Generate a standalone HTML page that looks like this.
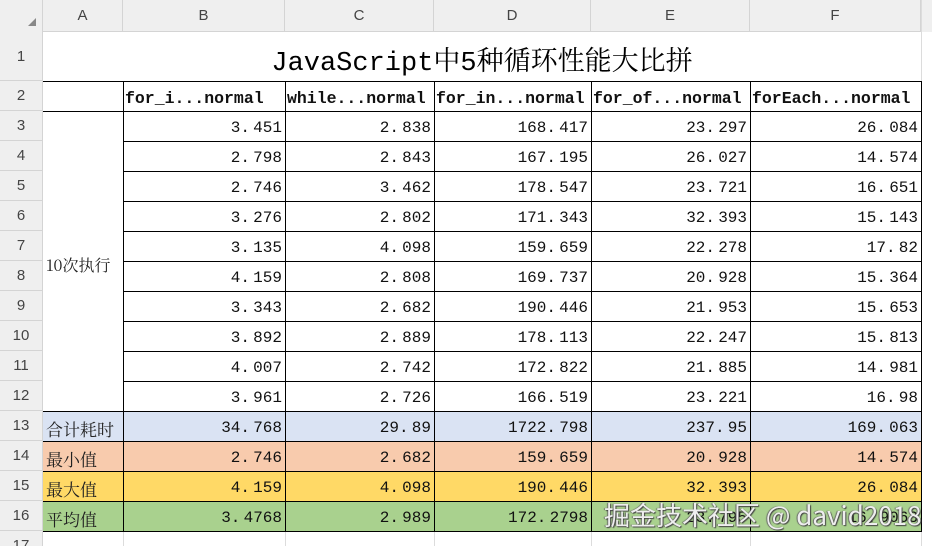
<!DOCTYPE html>
<html><head><meta charset="utf-8">
<style>
*{margin:0;padding:0;box-sizing:border-box}
html,body{width:932px;height:546px;overflow:hidden}
body{background:#fff;position:relative;font-family:"Liberation Mono","Noto Serif CJK SC",monospace}
.d{position:absolute}
.hdr{background:#efefef;color:#444;font-family:"Liberation Sans",sans-serif;font-size:15px;display:flex;align-items:center;justify-content:center}
.vl{position:absolute;width:1px;background:#000}
.hl{position:absolute;height:1px;background:#000}
.gl{position:absolute;background:#dcdcdc}
.c{position:absolute;font-size:16px;color:#111;display:flex;align-items:center;padding:0 3px;height:30px;white-space:nowrap}
.r{justify-content:flex-end}
.h{font-weight:bold;font-size:16.5px;padding:0 2px}
.cj{font-family:"Noto Serif CJK SC","Noto Sans CJK SC",serif;font-size:17px;color:#222}
</style></head><body>
<div class="d hdr" style="left:0;top:0;width:932px;height:32px"></div>
<div class="d hdr" style="left:0;top:0;width:43px;height:546px;border-right:1px solid #d4d4d4"></div>
<div class="d" style="left:28px;top:18px;width:0;height:0;border-left:8px solid transparent;border-bottom:8px solid #888"></div>
<div id="top"></div>
<script>
var cols=[43,123,285,434,591,750,921],L="ABCDEF";
var rowsY=[32,81,111,141,171,201,231,261,291,321,351,381,411,441,471,501,531,561];
var h='';
for(var i=0;i<6;i++)h+='<div class="d hdr" style="left:'+cols[i]+'px;top:0;width:'+(cols[i+1]-cols[i])+'px;height:32px;border-right:1px solid #d4d4d4;border-bottom:1px solid #d4d4d4">'+L[i]+'</div>';
h+='<div class="gl" style="left:921px;top:0;width:1px;height:546px"></div>';
for(var r=0;r<17;r++){h+='<div class="d hdr" style="left:0;top:'+rowsY[r]+'px;width:43px;height:'+(rowsY[r+1]-rowsY[r])+'px;border-bottom:1px solid #d4d4d4;border-right:1px solid #d4d4d4">'+(r+1)+'</div>';}
var fills={12:'#dae3f3',13:'#f8cbad',14:'#ffd966',15:'#a9d18e'};
for(var k in fills)h+='<div class="d" style="left:43px;top:'+rowsY[k]+'px;width:878px;height:30px;background:'+fills[k]+'"></div>';
for(var i=1;i<6;i++)h+='<div class="gl" style="left:'+cols[i]+'px;top:531px;width:1px;height:15px"></div>';
h+='<div class="d" style="left:43px;top:32px;width:878px;height:49px;display:flex;align-items:center;justify-content:center;font-family:\'Liberation Mono\',\'Noto Serif CJK SC\',monospace;font-size:27px;color:#000;padding-top:4px">JavaScript中5种循环性能大比拼</div>';
h+='<div class="hl" style="left:43px;top:81px;width:878px"></div>';
h+='<div class="hl" style="left:43px;top:111px;width:878px"></div>';
for(var r=3;r<=16;r++)h+='<div class="hl" style="left:'+(r>=12?43:123)+'px;top:'+rowsY[r]+'px;width:'+(r>=12?878:798)+'px"></div>';
for(var i=1;i<7;i++)h+='<div class="vl" style="left:'+cols[i]+'px;top:81px;height:451px"></div>';
var hd=['for_i...normal','while...normal','for_in...normal','for_of...normal','forEach...normal'];
for(var i=0;i<5;i++)h+='<div class="c h" style="left:'+cols[i+1]+'px;top:83px;width:'+(cols[i+2]-cols[i+1])+'px">'+hd[i]+'</div>';
var data=[
['3.451','2.838','168.417','23.297','26.084'],
['2.798','2.843','167.195','26.027','14.574'],
['2.746','3.462','178.547','23.721','16.651'],
['3.276','2.802','171.343','32.393','15.143'],
['3.135','4.098','159.659','22.278','17.82'],
['4.159','2.808','169.737','20.928','15.364'],
['3.343','2.682','190.446','21.953','15.653'],
['3.892','2.889','178.113','22.247','15.813'],
['4.007','2.742','172.822','21.885','14.981'],
['3.961','2.726','166.519','23.221','16.98'],
['34.768','29.89','1722.798','237.95','169.063'],
['2.746','2.682','159.659','20.928','14.574'],
['4.159','4.098','190.446','32.393','26.084'],
['3.4768','2.989','172.2798','23.795','16.9063']];
var lab={10:'合计耗时',11:'最小值',12:'最大值',13:'平均值'};
for(var r=0;r<14;r++){var y=rowsY[r+2]+2;
for(var i=0;i<5;i++)h+='<div class="c r" style="left:'+cols[i+1]+'px;top:'+y+'px;width:'+(cols[i+2]-cols[i+1])+'px">'+data[r][i].replace('.','.&thinsp;')+'</div>';
if(lab[r])h+='<div class="c cj" style="left:43px;top:'+y+'px;width:80px">'+lab[r]+'</div>';}
h+='<div class="c cj" style="left:43px;top:249px;width:80px;font-size:16px">10次执行</div>';
h+='<div class="d" style="left:604px;top:499px;font-family:\'Noto Sans CJK SC\',\'Liberation Sans\',sans-serif;font-size:26px;color:#eeeeee;text-shadow:1px 1px 1px #444,-1px 0 1px #666;white-space:nowrap;line-height:32px">掘金技术社区 @ david2018</div>';
document.getElementById('top').outerHTML=h;
</script>
</body></html>
